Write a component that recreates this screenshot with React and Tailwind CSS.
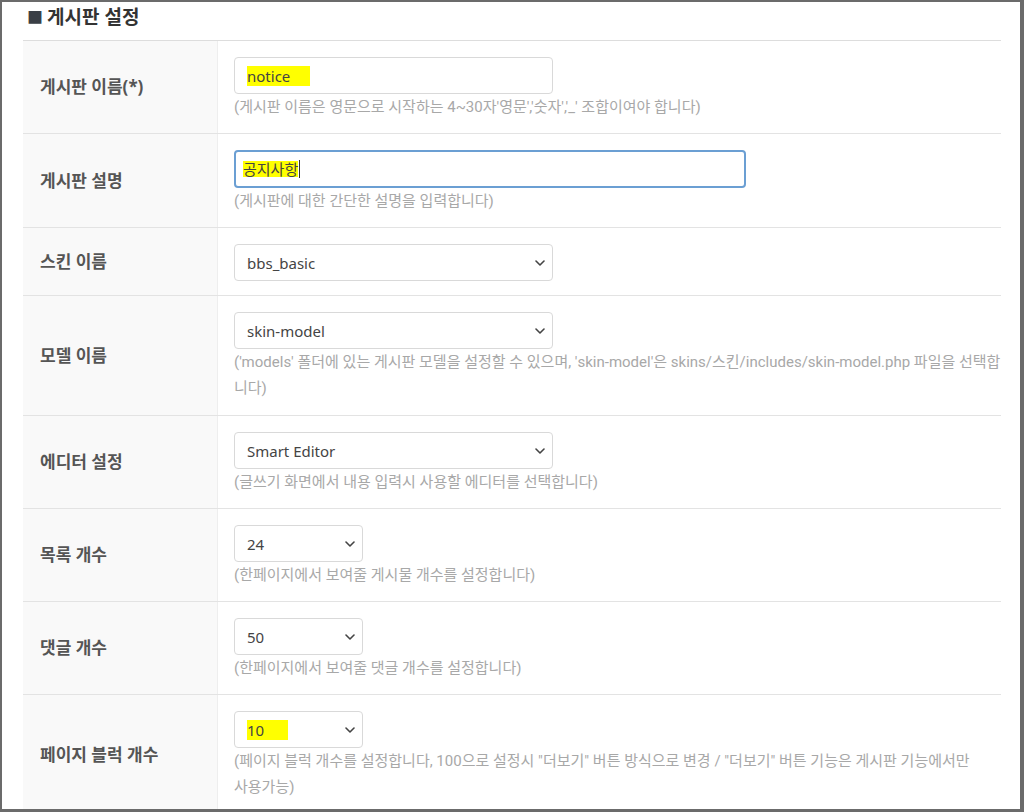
const rows = [
  { label: "게시판 이름(*)", kind: "text", value: "notice", width: "w-[319px]", mark: "pr-[20px]", help: ["(게시판 이름은 영문으로 시작하는 4~30자'영문','숫자','_' 조합이여야 합니다)"] },
  { label: "게시판 설명", kind: "focus", value: "공지사항", width: "w-[512px]", help: ["(게시판에 대한 간단한 설명을 입력합니다)"] },
  { label: "스킨 이름", kind: "select", value: "bbs_basic", width: "w-[319px]", help: [] },
  { label: "모델 이름", kind: "select", value: "skin-model", width: "w-[319px]", help: ["('models' 폴더에 있는 게시판 모델을 설정할 수 있으며, 'skin-model'은 skins/스킨/includes/skin-model.php 파일을 선택합", "니다)"] },
  { label: "에디터 설정", kind: "select", value: "Smart Editor", width: "w-[319px]", help: ["(글쓰기 화면에서 내용 입력시 사용할 에디터를 선택합니다)"] },
  { label: "목록 개수", kind: "select", value: "24", width: "w-[129px]", help: ["(한페이지에서 보여줄 게시물 개수를 설정합니다)"] },
  { label: "댓글 개수", kind: "select", value: "50", width: "w-[129px]", help: ["(한페이지에서 보여줄 댓글 개수를 설정합니다)"] },
  { label: "페이지 블럭 개수", kind: "select", value: "10", width: "w-[129px]", mark: "pr-[24px]", help: ["(페이지 블럭 개수를 설정합니다, 100으로 설정시 \"더보기\" 버튼 방식으로 변경 / \"더보기\" 버튼 기능은 게시판 기능에서만", "사용가능)"] },
];

function Chevron() {
  return (
    <svg width="10" height="6" viewBox="0 0 10 6" className="shrink-0">
      <path d="M1 1l4 4 4-4" fill="none" stroke="#444" strokeWidth="1.6" strokeLinecap="round" strokeLinejoin="round" />
    </svg>
  );
}

function Field({ row }) {
  const text = row.mark ? (
    <span className={`bg-[#ffff00] ${row.mark}`}>{row.value}</span>
  ) : (
    row.value
  );

  if (row.kind === "focus") {
    return (
      <div className={`${row.width} flex h-[38px] items-center rounded-[4px] border-2 border-[#6b9fd3] pl-[7px] text-[15px] text-[#444]`}>
        <span className="bg-[#ffff00] leading-[16px]">{row.value}</span>
        <span className="ml-px h-[18px] w-px bg-[#333]" />
      </div>
    );
  }

  return (
    <div className={`${row.width} flex h-[37px] items-center justify-between rounded-[4px] border border-[#d9d9d9] bg-white pl-[12px] pr-[7px] text-[15px] text-[#444]`}>
      <span className="leading-[16px]">{text}</span>
      {row.kind === "select" && <Chevron />}
    </div>
  );
}

export default function App() {
  return (
    <div className="box-border h-[812px] overflow-hidden border-t-2 border-r-4 border-b-[3px] border-l-2 border-[#6b6b6b] bg-white pl-[21px] pr-[19px] font-['Noto_Sans','Noto_Sans_CJK_KR',sans-serif]">
      <h2 className="flex h-[38px] items-center pb-[8px] pl-[4px] text-[19px] font-bold text-[#333]">
        <span className="mr-[4px] text-[16px] text-[#3a3f46]">■</span>게시판 설정
      </h2>
      <div className="border-t border-[#dddddd]">
        {rows.map((row) => (
          <div key={row.label} className="flex border-b border-[#e3e3e3]">
            <div className="flex w-[195px] shrink-0 items-center border-r border-[#eeeeee] bg-[#f9f9f9] pl-[17px] text-[17px] font-bold text-[#555]">
              {row.label}
            </div>
            <div className={`flex-1 pl-[16px] pt-[16px] ${row.help.length === 1 ? "pb-[13px]" : "pb-[14px]"}`}>
              <Field row={row} />
              {row.help.map((line) => (
                <p key={line} className="whitespace-nowrap font-['Roboto','Noto_Sans_CJK_KR',sans-serif] text-[15px] leading-[26px] text-[#a8a8a8]">{line}</p>
              ))}
            </div>
          </div>
        ))}
      </div>
    </div>
  );
}
